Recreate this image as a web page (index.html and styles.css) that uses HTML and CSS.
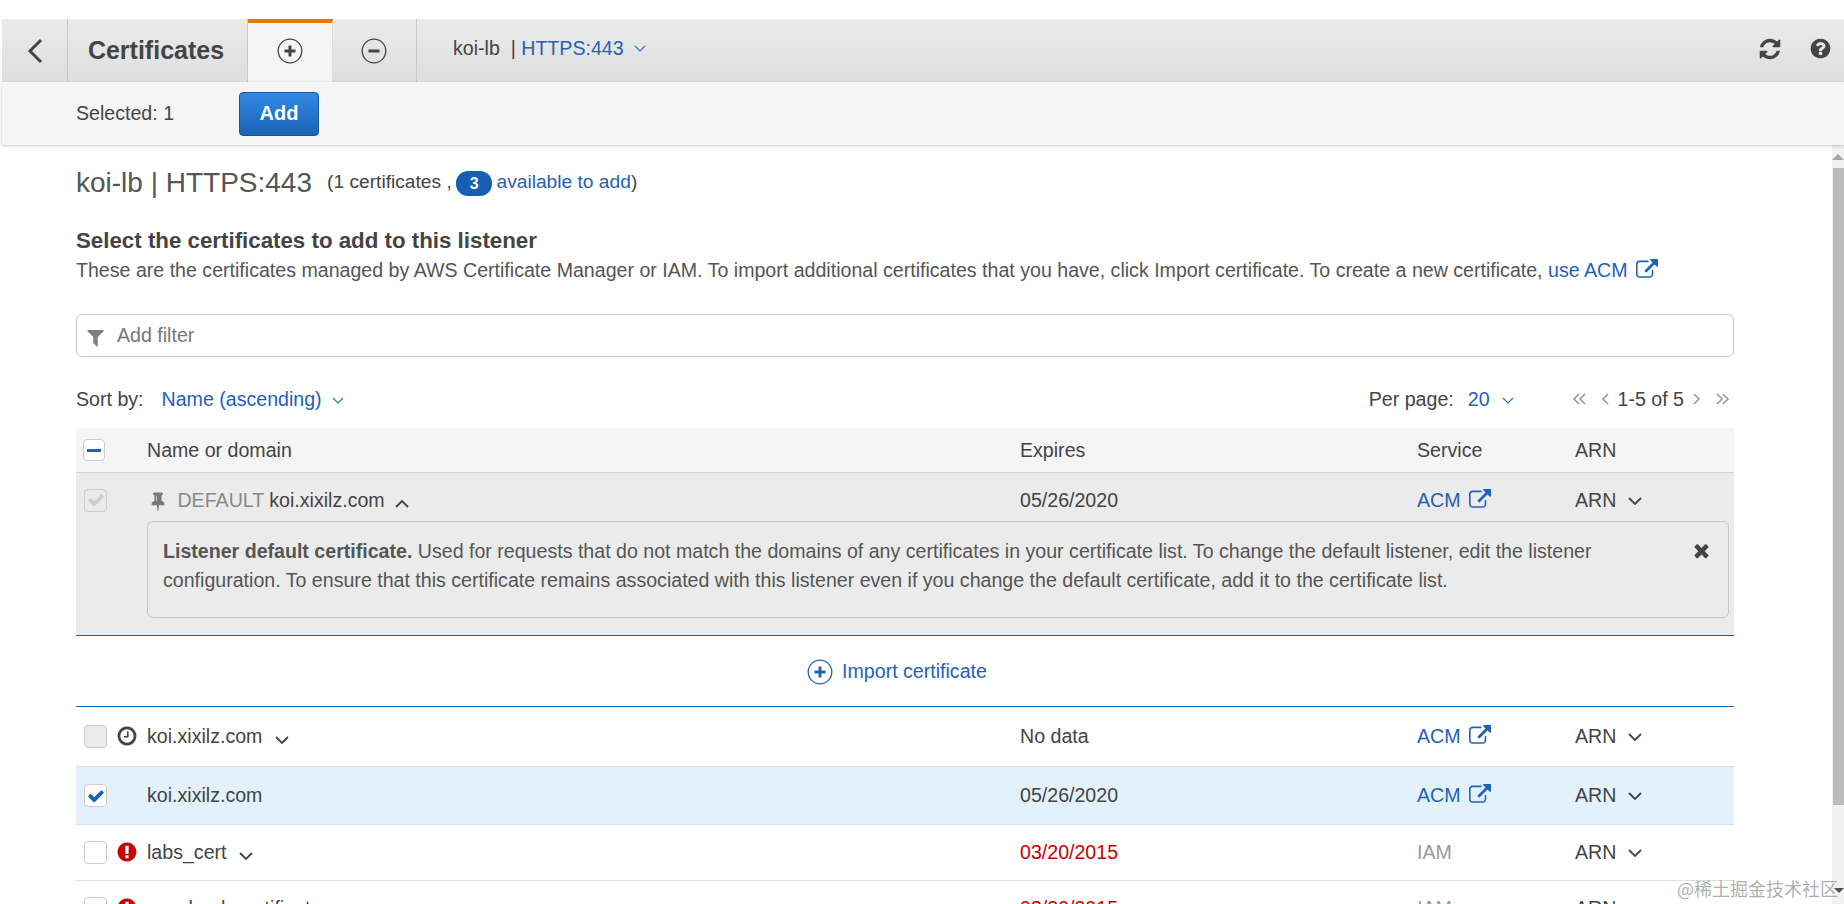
FILE: index.html
```html
<!DOCTYPE html>
<html lang="en">
<head>
  <meta charset="UTF-8">
  <meta name="viewport" content="width=device-width, initial-scale=1.0">
  <title>Certificates</title>
  <link rel="stylesheet" href="styles.css">
</head>
<body>

<svg class="sprite" width="0" height="0">
  <symbol id="i-ext" viewBox="0 0 1792 1792"><path d="M1408 928v320q0 119-84.5 203.5t-203.5 84.5h-832q-119 0-203.5-84.5t-84.5-203.5v-832q0-119 84.5-203.5t203.5-84.5h704q14 0 23 9t9 23v64q0 14-9 23t-23 9h-704q-66 0-113 47t-47 113v832q0 66 47 113t113 47h832q66 0 113-47t47-113v-320q0-14 9-23t23-9h64q14 0 23 9t9 23zm384-864v512q0 26-19 45t-45 19-45-19l-176-176-652 652q-10 10-23 10t-23-10l-114-114q-10-10-10-23t10-23l652-652-176-176q-19-19-19-45t19-45 45-19h512q26 0 45 19t19 45z"/></symbol>
  <symbol id="i-refresh" viewBox="0 0 1792 1792"><path d="M1639 1056q0 5-1 7-64 268-268 434.5t-478 166.5q-146 0-282.5-55t-243.5-157l-129 129q-19 19-45 19t-45-19-19-45v-448q0-26 19-45t45-19h448q26 0 45 19t19 45-19 45l-137 137q71 66 161 102t187 36q134 0 250-65t186-179q11-17 53-117 8-23 30-23h192q13 0 22.5 9.5t9.5 22.5zm25-800v448q0 26-19 45t-45 19h-448q-26 0-45-19t-19-45 19-45l138-138q-148-137-349-137-134 0-250 65t-186 179q-11 17-53 117-8 23-30 23h-199q-13 0-22.5-9.5t-9.5-22.5v-7q65-268 270-434.5t480-166.5q146 0 284 55.5t245 156.5l130-129q19-19 45-19t45 19 19 45z"/></symbol>
  <symbol id="i-help" viewBox="0 0 1792 1792"><path d="M1024 1376v-192q0-14-9-23t-23-9h-192q-14 0-23 9t-9 23v192q0 14 9 23t23 9h192q14 0 23-9t9-23zm256-672q0-88-55.5-163t-138.5-116-170-41q-243 0-371 213-15 24 8 42l132 100q7 6 19 6 16 0 25-12 53-68 86-92 34-24 86-24 48 0 85.5 26t37.5 59q0 38-20 61t-68 45q-63 28-115.5 86.5t-52.5 125.5v36q0 14 9 23t23 9h192q14 0 23-9t9-23q0-19 21.5-49.5t54.5-49.5q32-18 49-28.5t46-35 44.5-48 28-60.5 12.5-81zm384 192q0 209-103 385.5t-279.5 279.5-385.5 103-385.5-103-279.5-279.5-103-385.5 103-385.5 279.5-279.5 385.5-103 385.5 103 279.5 279.5 103 385.5z"/></symbol>
  <symbol id="i-warn" viewBox="0 0 1792 1792"><path d="M896 128q209 0 385.5 103t279.5 279.5 103 385.5-103 385.5-279.5 279.5-385.5 103-385.5-103-279.5-279.5-103-385.5 103-385.5 279.5-279.5 385.5-103zm128 1247v-190q0-14-9-23.5t-22-9.5h-192q-13 0-23 10t-10 23v190q0 13 10 23t23 10h192q13 0 22-9.5t9-23.5zm-2-344l18-621q0-12-10-18-10-8-24-8h-220q-14 0-24 8-10 6-10 18l17 621q0 10 10 17.5t24 7.5h185q14 0 23.5-7.5t10.5-17.5z"/></symbol>
  <symbol id="i-clock" viewBox="0 0 1792 1792"><path d="M1024 544v448q0 14-9 23t-23 9h-320q-14 0-23-9t-9-23v-64q0-14 9-23t23-9h224v-352q0-14 9-23t23-9h64q14 0 23 9t9 23zm416 352q0-148-73-273t-198-198-273-73-273 73-198 198-73 273 73 273 198 198 273 73 273-73 198-198 73-273zm224 0q0 209-103 385.5t-279.5 279.5-385.5 103-385.5-103-279.5-279.5-103-385.5 103-385.5 279.5-279.5 385.5-103 385.5 103 279.5 279.5 103 385.5z"/></symbol>
  <symbol id="i-filter" viewBox="0 0 1792 1792"><path d="M1595 295q17 41-14 70l-493 493v742q0 42-39 59-13 5-25 5-27 0-45-19l-256-256q-19-19-19-45v-486l-493-493q-31-29-14-70 17-39 59-39h1280q42 0 59 39z"/></symbol>
  <symbol id="i-pin" viewBox="0 0 1792 1792"><path d="M800 864v-448q0-14-9-23t-23-9-23 9-9 23v448q0 14 9 23t23 9 23-9 9-23zm672 352q0 26-19 45t-45 19h-429l-51 483q-2 12-10.5 20.5t-20.5 8.5h-1q-27 0-32-27l-76-485h-404q-26 0-45-19t-19-45q0-123 78.5-221.5t177.5-98.5v-512q-52 0-90-38t-38-90 38-90 90-38h640q52 0 90 38t38 90-38 90-90 38v512q99 0 177.5 98.5t78.5 221.5z"/></symbol>
  <symbol id="i-times" viewBox="0 0 1792 1792"><path d="M1490 1322q0 40-28 68l-136 136q-28 28-68 28t-68-28l-294-294-294 294q-28 28-68 28t-68-28l-136-136q-28-28-28-68t28-68l294-294-294-294q-28-28-28-68t28-68l136-136q28-28 68-28t68 28l294 294 294-294q28-28 68-28t68 28l136 136q28 28 28 68t-28 68l-294 294 294 294q28 28 28 68z"/></symbol>
  <symbol id="i-check" viewBox="0 0 1792 1792"><path d="M1671 566q0 40-28 68l-724 724-136 136q-28 28-68 28t-68-28l-136-136-362-362q-28-28-28-68t28-68l136-136q28-28 68-28t68 28l294 295 656-657q28-28 68-28t68 28l136 136q28 28 28 68z"/></symbol>
  <symbol id="i-down" viewBox="0 0 14 8"><path d="M1 1l6 6 6-6" fill="none" stroke="currentColor" stroke-width="1.8"/></symbol>
  <symbol id="i-up" viewBox="0 0 14 8"><path d="M1 7l6-6 6 6" fill="none" stroke="currentColor" stroke-width="1.8"/></symbol>
  <symbol id="i-thin" viewBox="0 0 12 7"><path d="M1 1l5 5 5-5" fill="none" stroke="currentColor" stroke-width="1.1"/></symbol>
  <symbol id="i-plus" viewBox="0 0 26 26"><circle cx="13" cy="13" r="11.8" fill="none" stroke="currentColor" stroke-width="1.3"/><path d="M13 7.5v11M7.5 13h11" fill="none" stroke="currentColor" stroke-width="3"/></symbol>
  <symbol id="i-minus" viewBox="0 0 26 26"><circle cx="13" cy="13" r="11.8" fill="none" stroke="currentColor" stroke-width="1.3"/><path d="M7.5 13h11" fill="none" stroke="currentColor" stroke-width="3"/></symbol>
  <symbol id="i-first" viewBox="0 0 14 12"><path d="M7 1L2 6l5 5M13 1L8 6l5 5" fill="none" stroke="currentColor" stroke-width="1.6"/></symbol>
  <symbol id="i-last" viewBox="0 0 14 12"><path d="M1 1l5 5-5 5M7 1l5 5-5 5" fill="none" stroke="currentColor" stroke-width="1.6"/></symbol>
  <symbol id="i-prev" viewBox="0 0 8 12"><path d="M7 1L2 6l5 5" fill="none" stroke="currentColor" stroke-width="1.6"/></symbol>
  <symbol id="i-next" viewBox="0 0 8 12"><path d="M1 1l5 5-5 5" fill="none" stroke="currentColor" stroke-width="1.6"/></symbol>
</svg>

<div class="page">
  <div class="topbar">
    <a class="tab tab-back"><svg class="back-arrow" viewBox="0 0 16 26"><path d="M14 2L3 13l11 11" fill="none" stroke="currentColor" stroke-width="3"/></svg></a>
    <div class="tab tab-title">Certificates</div>
    <a class="tab tab-icon active"><svg class="ic-26"><use href="#i-plus"/></svg></a>
    <a class="tab tab-icon"><svg class="ic-26"><use href="#i-minus"/></svg></a>
    <div class="crumb">koi-lb &nbsp;|&nbsp;<a class="link">HTTPS:443</a><svg class="ic-thin"><use href="#i-thin"/></svg></div>
    <div class="top-actions">
      <svg class="ic-refresh"><use href="#i-refresh"/></svg>
      <svg class="ic-help"><use href="#i-help"/></svg>
    </div>
  </div>

  <div class="toolbar">
    <span class="selected">Selected: 1</span>
    <button class="btn">Add</button>
  </div>

  <div class="main">
    <div class="content">
      <div class="title-row">
        <h1>koi-lb | HTTPS:443</h1>
        <span class="title-meta">(1 certificates , <span class="badge">3</span> <a class="link">available to add</a>)</span>
      </div>

      <h2>Select the certificates to add to this listener</h2>
      <p class="desc">These are the certificates managed by AWS Certificate Manager or IAM. To import additional certificates that you have, click Import certificate. To create a new certificate, <a class="link">use ACM <svg class="ic-ext"><use href="#i-ext"/></svg></a></p>

      <div class="filter">
        <svg class="ic-filter"><use href="#i-filter"/></svg>
        <span>Add filter</span>
      </div>

      <div class="sort-row">
        <div class="sort">Sort by:<a class="link sort-value">Name (ascending)</a><svg class="ic-thin"><use href="#i-thin"/></svg></div>
        <div class="pager">
          <span class="per-page">Per page:<a class="link">20</a><svg class="ic-thin"><use href="#i-thin"/></svg></span>
          <span class="pages">
            <svg class="pg-dbl"><use href="#i-first"/></svg>
            <svg class="pg-one"><use href="#i-prev"/></svg>
            <span class="pg-text">1-5 of 5</span>
            <svg class="pg-one"><use href="#i-next"/></svg>
            <svg class="pg-dbl"><use href="#i-last"/></svg>
          </span>
        </div>
      </div>

      <table class="certs">
        <colgroup>
          <col class="col-check"><col class="col-name"><col class="col-exp"><col class="col-svc"><col>
        </colgroup>
        <thead>
          <tr>
            <th><span class="box box-head"><span class="dash"></span></span></th>
            <th>Name or domain</th>
            <th>Expires</th>
            <th>Service</th>
            <th>ARN</th>
          </tr>
        </thead>
        <tbody>
          <tr class="row-default">
            <td><span class="box box-off"><svg class="ic-check"><use href="#i-check"/></svg></span></td>
            <td><svg class="ic-pin"><use href="#i-pin"/></svg> <span class="muted">DEFAULT</span> koi.xixilz.com <svg class="ic-chev up"><use href="#i-up"/></svg></td>
            <td>05/26/2020</td>
            <td><a class="link">ACM <svg class="ic-ext"><use href="#i-ext"/></svg></a></td>
            <td>ARN <svg class="ic-chev"><use href="#i-down"/></svg></td>
          </tr>
          <tr class="row-alert">
            <td></td>
            <td colspan="4">
              <div class="alert">
                <p><b>Listener default certificate.</b> Used for requests that do not match the domains of any certificates in your certificate list. To change the default listener, edit the listener configuration. To ensure that this certificate remains associated with this listener even if you change the default certificate, add it to the certificate list.</p>
                <svg class="ic-times"><use href="#i-times"/></svg>
              </div>
            </td>
          </tr>
          <tr class="row-import">
            <td colspan="5"><a class="link import"><svg class="ic-26"><use href="#i-plus"/></svg> Import certificate</a></td>
          </tr>
          <tr class="row r1">
            <td><div class="check-cell"><span class="box box-dis"></span><svg class="ic-status clock"><use href="#i-clock"/></svg></div></td>
            <td>koi.xixilz.com <svg class="ic-chev"><use href="#i-down"/></svg></td>
            <td>No data</td>
            <td><a class="link">ACM <svg class="ic-ext"><use href="#i-ext"/></svg></a></td>
            <td>ARN <svg class="ic-chev"><use href="#i-down"/></svg></td>
          </tr>
          <tr class="row r2 selected-row">
            <td><div class="check-cell"><span class="box"><svg class="ic-check on"><use href="#i-check"/></svg></span></div></td>
            <td>koi.xixilz.com</td>
            <td>05/26/2020</td>
            <td><a class="link">ACM <svg class="ic-ext"><use href="#i-ext"/></svg></a></td>
            <td>ARN <svg class="ic-chev"><use href="#i-down"/></svg></td>
          </tr>
          <tr class="row r3">
            <td><div class="check-cell"><span class="box"></span><svg class="ic-status warn"><use href="#i-warn"/></svg></div></td>
            <td>labs_cert <svg class="ic-chev"><use href="#i-down"/></svg></td>
            <td class="expired">03/20/2015</td>
            <td class="muted">IAM</td>
            <td>ARN <svg class="ic-chev"><use href="#i-down"/></svg></td>
          </tr>
          <tr class="row r3">
            <td><div class="check-cell"><span class="box"></span><svg class="ic-status warn"><use href="#i-warn"/></svg></div></td>
            <td>passbook-certificate <svg class="ic-chev"><use href="#i-down"/></svg></td>
            <td class="expired">03/20/2015</td>
            <td class="muted">IAM</td>
            <td>ARN <svg class="ic-chev"><use href="#i-down"/></svg></td>
          </tr>
        </tbody>
      </table>
    </div>

    <div class="scrollbar">
      <span class="arrow-up"></span>
      <div class="thumb"></div>
      <span class="arrow-down"></span>
    </div>
  </div>
</div>

<div class="watermark">@稀土掘金技术社区</div>

</body>
</html>
```

FILE: styles.css
```css
html, body {
  margin: 0;
  height: 904px;
  overflow: hidden;
  background: #fff;
}
body {
  font-family: "Liberation Sans", Arial, sans-serif;
  font-size: 19.6px;
  color: #444;
}
.sprite {
  position: absolute;
}
svg {
  fill: currentColor;
}
.page {
  display: flex;
  flex-direction: column;
  height: 904px;
  padding-top: 19px;
  box-sizing: border-box;
}
.link {
  color: #1f62b8;
}

/* top bar */
.topbar {
  display: flex;
  align-items: stretch;
  height: 63px;
  margin-left: 2px;
  background: linear-gradient(#ebebeb, #dedede);
}
.tab {
  display: flex;
  align-items: center;
  justify-content: center;
  box-sizing: border-box;
  border-right: 1px solid #c8c8c8;
  margin-right: 4px;
}
.tab-back {
  width: 66px;
  margin-right: 3px;
}
.back-arrow {
  width: 16px;
  height: 26px;
}
.tab-title {
  width: 177px;
  margin-right: 0;
  padding-right: 6px;
  font-size: 25px;
  font-weight: bold;
}
.tab-icon {
  width: 85px;
}
.tab-icon + .tab-icon {
  width: 80px;
  padding-right: 6px;
}
.tab-icon.active {
  background: #f5f5f5;
  border-top: 4px solid #e47911;
  border-right: 1px solid #ddd;
  padding-bottom: 4px;
}
.ic-26 {
  width: 26px;
  height: 26px;
}
.crumb {
  display: flex;
  align-items: center;
  margin-left: 32px;
  padding-bottom: 4px;
  white-space: pre;
}
.crumb .ic-thin {
  margin-left: 10px;
}
.ic-thin {
  width: 12px;
  height: 7px;
  color: #2a6cc0;
}
.top-actions {
  display: flex;
  align-items: center;
  gap: 27px;
  margin-left: auto;
  padding: 0 12px 4px 0;
}
.ic-refresh {
  width: 24px;
  height: 24px;
}
.ic-help {
  width: 23px;
  height: 23px;
}

/* toolbar */
.toolbar {
  display: flex;
  align-items: center;
  height: 63px;
  margin-left: 2px;
  padding-left: 74px;
  background: #f5f5f5;
  box-shadow: 0 1px 3px rgba(0, 0, 0, 0.22);
  position: relative;
  z-index: 1;
}
.selected {
  width: 163px;
}
.btn {
  width: 80px;
  height: 44px;
  padding: 0;
  border: 1px solid #14559c;
  border-radius: 4px;
  background: linear-gradient(#2f8ae6, #1a62b4);
  color: #fff;
  font-family: inherit;
  font-size: 20px;
  font-weight: bold;
}

/* main */
.main {
  flex: 1;
  display: flex;
  min-height: 0;
}
.content {
  flex: 1;
  min-width: 0;
  padding: 23px 98px 0 76px;
}
.title-row {
  display: flex;
  align-items: center;
  height: 30px;
  gap: 15px;
}
h1 {
  margin: 0;
  font-size: 28px;
  font-weight: normal;
  color: #555;
}
.title-meta {
  white-space: pre;
  font-size: 19.2px;
}
.badge {
  display: inline-block;
  width: 36px;
  height: 25px;
  margin: 0 -1px 0 -1px;
  border-radius: 12px;
  background: #1560b0;
  color: #fff;
  font-size: 16px;
  font-weight: bold;
  line-height: 25px;
  text-align: center;
  vertical-align: -1px;
}
h2 {
  margin: 31px 0 0;
  font-size: 22.3px;
  line-height: 24px;
}
.desc {
  height: 24px;
  margin: 5px 0 0;
  line-height: 24px;
  white-space: nowrap;
  color: #555;
}
.ic-ext {
  width: 22px;
  height: 22px;
  margin: -5px 0 -3px 3px;
  vertical-align: -1px;
}
.filter {
  display: flex;
  align-items: center;
  gap: 11px;
  height: 43px;
  margin-top: 32px;
  padding-left: 8px;
  box-sizing: border-box;
  border: 1px solid #c8c8c8;
  border-radius: 6px;
  color: #777;
}
.ic-filter {
  width: 21px;
  height: 21px;
  color: #808080;
  margin-top: 3px;
}
.sort-row {
  display: flex;
  justify-content: space-between;
  align-items: center;
  height: 30px;
  margin-top: 27px;
  padding-right: 4px;
}
.sort-value {
  margin-left: 18px;
}
.sort .ic-thin {
  margin-left: 10px;
  vertical-align: 2px;
}
.pager {
  display: flex;
  align-items: center;
  gap: 58px;
}
.per-page a {
  margin-left: 14px;
}
.per-page .ic-thin {
  margin-left: 12px;
  vertical-align: 2px;
}
.pages {
  display: flex;
  align-items: center;
  gap: 9px;
  color: #999;
}
.pg-text {
  color: #444;
}
.pg-dbl {
  width: 14px;
  height: 12px;
}
.pg-dbl:first-child {
  margin-right: 6px;
}
.pg-dbl:last-child {
  margin-left: 6px;
}
.pg-one {
  width: 8px;
  height: 12px;
}

/* table */
.certs {
  width: 100%;
  margin-top: 14px;
  border-collapse: separate;
  border-spacing: 0;
  table-layout: fixed;
}
.col-check {
  width: 71px;
}
.col-name {
  width: 873px;
}
.col-exp {
  width: 397px;
}
.col-svc {
  width: 158px;
}
.certs th, .certs td {
  padding: 0;
  text-align: left;
  font-weight: normal;
  white-space: nowrap;
}
.certs th {
  height: 44px;
  background: #f5f5f5;
  border-bottom: 1px solid #d5d5d5;
}
.certs td:first-child, .certs th:first-child {
  padding-left: 8px;
}
.box {
  display: flex;
  align-items: center;
  justify-content: center;
  width: 23px;
  height: 23px;
  box-sizing: border-box;
  flex: none;
  border: 1px solid #ccc;
  border-radius: 4px;
  background: #fff;
}
.box-head {
  width: 22px;
  height: 22px;
  margin-left: -1px;
}
.dash {
  width: 14px;
  height: 3px;
  background: #1664c0;
}
.box-off {
  background: #ebebeb;
}
.box-dis {
  background: #ebebeb;
}
.ic-check {
  width: 18px;
  height: 18px;
  color: #ccc;
}
.ic-check.on {
  color: #1664b8;
}
.ic-pin {
  width: 20px;
  height: 20px;
  color: #777;
  vertical-align: -2px;
  margin: -4px 4px -2px 1px;
}
.ic-chev {
  width: 14px;
  height: 8px;
  color: #444;
  margin-left: 7px;
  vertical-align: -1px;
}
.ic-chev.up {
  margin-left: 5px;
}
.certs td:last-child .ic-chev {
  margin-left: 6px;
  vertical-align: 2px;
}
.muted {
  color: #888;
}
.certs td.muted {
  color: #999;
}
.expired {
  color: #c70000;
}
.row-default td {
  height: 42px;
  padding-top: 6px;
  background: #ebebeb;
}
.row-alert td {
  padding-top: 0;
  padding-bottom: 17px;
  background: #ebebeb;
  border-bottom: 1px solid #1664b8;
}
.alert {
  display: flex;
  justify-content: space-between;
  height: 97px;
  box-sizing: border-box;
  margin-right: 5px;
  padding: 15px 16px 0 15px;
  border: 1px solid #c8c8c8;
  border-radius: 6px;
  line-height: 29px;
  color: #555;
  white-space: normal;
}
.alert p {
  margin: 0;
  width: 1450px;
}
.ic-times {
  width: 21px;
  height: 21px;
  color: #444;
  margin-top: 3px;
  flex: none;
}
.certs .row-import td {
  height: 64px;
  padding-top: 6px;
  text-align: center;
  border-bottom: 1px solid #1664b8;
}
.import {
  display: inline-flex;
  align-items: center;
  gap: 9px;
  margin-right: 24px;
}
.row td {
  border-bottom: 1px solid #ddd;
}
.r1 td {
  height: 59px;
}
.r2 td {
  height: 57px;
}
.r3 td {
  height: 55px;
}
.selected-row td {
  background: #e2f1fc;
}
.check-cell {
  display: flex;
  align-items: center;
  gap: 10px;
}
.ic-status {
  width: 22px;
  height: 22px;
  margin: -2px 0 0 -1px;
}
.warn {
  color: #c70000;
}

/* scrollbar */
.scrollbar {
  flex: none;
  width: 12px;
  display: flex;
  flex-direction: column;
  align-items: flex-end;
  background: #f1f1f1;
}
.arrow-up {
  margin: 9px 0 0;
  border-left: 6px solid transparent;
  border-right: 6px solid transparent;
  border-bottom: 6px solid #a3a3a3;
}
.thumb {
  width: 11px;
  height: 637px;
  margin-top: 8px;
  background: #bcbcbc;
}
.arrow-down {
  margin-top: 83px;
  border-left: 5px solid transparent;
  border-right: 5px solid transparent;
  border-top: 5px solid #505050;
}

.watermark {
  position: absolute;
  right: 6px;
  bottom: 5px;
  font-family: "Noto Sans CJK SC", sans-serif;
  font-size: 18px;
  line-height: 22px;
  color: rgba(120, 120, 120, 0.6);
}
```
